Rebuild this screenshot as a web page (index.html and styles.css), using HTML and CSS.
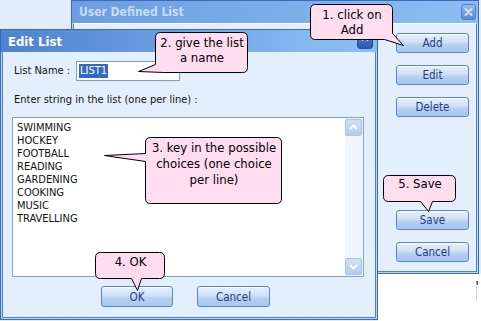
FILE: index.html
```html
<!DOCTYPE html>
<html>
<head>
<meta charset="utf-8">
<link rel="stylesheet" href="styles.css">
</head>
<body>
<div class="desk">
  <div class="desk-white"><span class="edge-tick"></span></div>

  <div class="win win-back">
    <div class="titlebar inactive">
      <span class="title">User Defined List</span>
      <span class="close"><svg width="15" height="16" viewBox="0 0 15 16"><path d="M4.5 5 L10.5 11 M10.5 5 L4.5 11" stroke="#d3e2f7" stroke-width="2.2" stroke-linecap="round"/></svg></span>
    </div>
    <div class="frame">
      <div class="win-body back-body">
        <div class="back-left"></div>
        <div class="back-col">
          <div class="grp">
            <button class="btn">Add</button>
            <button class="btn">Edit</button>
            <button class="btn">Delete</button>
          </div>
          <div class="grp">
            <button class="btn">Save</button>
            <button class="btn">Cancel</button>
          </div>
        </div>
      </div>
    </div>
  </div>

  <div class="win win-edit">
    <div class="titlebar">
      <span class="title title-edit">Edit List</span>
      <span class="roll"><svg width="16" height="16" viewBox="0 0 16 16"><path d="M5 7.5 L8 4.5 L11 7.5" fill="none" stroke="#fff" stroke-width="1.6"/></svg></span>
    </div>
    <div class="frame">
      <div class="win-body edit-body">
        <div class="name-row">
          <span class="lbl">List Name :</span>
          <div class="input"><span class="sel">LIST1</span></div>
        </div>
        <div class="lbl lbl-enter">Enter string in the list (one per line) :</div>
        <div class="memo">
          <div class="lines">
            <div>SWIMMING</div>
            <div>HOCKEY</div>
            <div>FOOTBALL</div>
            <div>READING</div>
            <div>GARDENING</div>
            <div>COOKING</div>
            <div>MUSIC</div>
            <div>TRAVELLING</div>
          </div>
          <div class="vscroll">
            <span class="sbtn"><svg width="17" height="17" viewBox="0 0 17 17"><path d="M5 10 L8.5 6.5 L12 10" fill="none" stroke="#fff" stroke-width="1.8"/></svg></span>
            <span class="track"></span>
            <span class="sbtn"><svg width="17" height="17" viewBox="0 0 17 17"><path d="M5 7 L8.5 10.5 L12 7" fill="none" stroke="#fff" stroke-width="1.8"/></svg></span>
          </div>
        </div>
        <div class="btn-row">
          <button class="btn">OK</button>
          <button class="btn">Cancel</button>
        </div>
      </div>
    </div>
  </div>

  <svg class="callouts" width="481" height="321" viewBox="0 0 481 321">
    <path d="M315.5,4.5 H387.5 Q392.5,4.5 392.5,9.5 V33.5 L403.5,45.5 L384.5,39.5 H315.5 Q310.5,39.5 310.5,34.5 V9.5 Q310.5,4.5 315.5,4.5 Z"/>
    <path d="M160.5,32.5 H242.5 Q247.5,32.5 247.5,37.5 V67.5 Q247.5,72.5 242.5,72.5 H163.5 L138.5,71.5 L155.5,64.5 V37.5 Q155.5,32.5 160.5,32.5 Z"/>
    <path d="M150.5,137.5 H276.5 Q281.5,137.5 281.5,142.5 V198.5 Q281.5,203.5 276.5,203.5 H150.5 Q145.5,203.5 145.5,198.5 V161.5 L104.5,155.5 L145.5,153.5 V142.5 Q145.5,137.5 150.5,137.5 Z"/>
    <path d="M100.5,252.5 H159.5 Q164.5,252.5 164.5,257.5 V273.5 Q164.5,278.5 159.5,278.5 H141.5 L137.5,290.5 L131.5,278.5 H100.5 Q95.5,278.5 95.5,273.5 V257.5 Q95.5,252.5 100.5,252.5 Z"/>
    <path d="M388.5,175.5 H450.5 Q455.5,175.5 455.5,180.5 V196.5 Q455.5,201.5 450.5,201.5 H432.5 L428.5,211.5 L420.5,201.5 H388.5 Q383.5,201.5 383.5,196.5 V180.5 Q383.5,175.5 388.5,175.5 Z"/>
  </svg>
  <div class="ctext c1">1. click on<br>Add</div>
  <div class="ctext c2">2. give the list<br>a name</div>
  <div class="ctext c3">3. key in the possible<br>choices (one choice<br>per line)</div>
  <div class="ctext c4">4. OK</div>
  <div class="ctext c5">5. Save</div>
</div>
</body>
</html>
```

FILE: styles.css
```css
* { box-sizing: border-box; }
html, body { margin: 0; padding: 0; }
body {
  width: 481px;
  height: 321px;
  overflow: hidden;
  font-family: "DejaVu Sans Condensed", "DejaVu Sans", sans-serif;
  font-stretch: condensed;
  font-size: 11px;
  color: #000;
}
.desk {
  position: relative;
  width: 481px;
  height: 321px;
  background: #e0ecf9;
}
.desk-white {
  position: absolute;
  left: 378px;
  top: 274px;
  width: 103px;
  height: 47px;
  background: #fff;
}
.edge-tick {
  position: absolute;
  left: 98px;
  top: 7px;
  width: 2px;
  height: 20px;
  border-left: 1px solid #c9d3de;
  border-top: 4px solid #6c58a8;
}

/* windows */
.win {
  position: absolute;
  display: flex;
  flex-direction: column;
  border: 1px solid #3a6bbd;
  background: #e3effc;
}
.win-back { left: 71px; top: 0; width: 408px; height: 274px; }
.win-edit { left: 0; top: 29px; width: 378px; height: 291px; }

.titlebar {
  height: 22px;
  flex: none;
  display: flex;
  align-items: center;
  padding-left: 7px;
  background: linear-gradient(90deg, #4d83cf 0%, #6a9fe2 45%, #84b8f0 80%, #8cbdf2 100%);
}
.titlebar.inactive {
  background: linear-gradient(90deg, #6b9de0 0%, #7aaeea 50%, #8dbdf2 100%);
}
.title {
  flex: 1;
  font-weight: bold;
  font-size: 12px;
  color: #fff;
}
.title-edit { font-size: 13px; }
.inactive .title { color: #cadcf5; }

.close {
  width: 15px;
  height: 16px;
  margin-right: 2px;
  border-radius: 3px;
  border: 1px solid #4d7fcb;
  background: linear-gradient(#9cc0ee, #6f9de0 55%, #5a8bd7);
  display: flex;
}
.close svg { margin: -1px; }
.roll {
  width: 16px;
  height: 16px;
  margin-right: 4px;
  border-radius: 3px;
  background: linear-gradient(#4e7fcf, #2a5bb0);
  border: 1px solid #24509e;
  display: flex;
}
.roll svg { margin: -1px; }

.frame {
  flex: 1;
  display: flex;
  padding: 0 1px 1px;
  background: #bcd3f1;
}
.win-body {
  flex: 1;
  border: 1px solid #4f80cb;
  border-top: none;
  background: #e3effc;
}

/* back window */
.back-body {
  display: flex;
  border-top: 1px solid #fff;
}
.back-left { flex: 1; }
.back-col {
  width: 73px;
  margin-right: 7px;
  padding: 9px 0 9px;
  display: flex;
  flex-direction: column;
  justify-content: space-between;
}
.grp {
  display: flex;
  flex-direction: column;
  gap: 12px;
}

.btn {
  width: 73px;
  height: 20px;
  padding: 0;
  border: 1px solid #5f86c6;
  border-radius: 3px;
  background: linear-gradient(#e8f1fc 0%, #cfe0f6 45%, #b5cff1 60%, #a9c6ee 100%);
  box-shadow: inset 0 1px 0 #f6faff;
  font-family: inherit;
  font-stretch: condensed;
  font-size: 11.5px;
  color: #1f3c8c;
  line-height: 18px;
}

/* edit list */
.edit-body {
  display: flex;
  flex-direction: column;
  padding-left: 9px;
}
.name-row {
  display: flex;
  align-items: center;
  margin-top: 9px;
  height: 20px;
}
.lbl { padding-left: 2px; line-height: 14px; color: #111; }
.name-row .lbl { width: 64px; }
.input {
  width: 104px;
  height: 20px;
  border: 1px solid #7b9dd3;
  background: #fff;
  padding: 2px 0 0 2px;
}
.sel {
  display: inline-block;
  background: #316ac5;
  color: #fff;
  height: 14px;
  line-height: 14px;
  padding: 0 1px;
}
.lbl-enter { margin-top: 12px; }

.memo {
  margin-top: 10px;
  width: 352px;
  height: 160px;
  border: 1px solid #7fa3d6;
  background: #fff;
  display: flex;
}
.lines {
  flex: 1;
  padding: 3px 0 0 4px;
  line-height: 13px;
  color: #111;
}
.vscroll {
  width: 18px;
  display: flex;
  flex-direction: column;
  padding: 1px 1px 1px 0;
  background: #f1f6fd;
}
.sbtn {
  width: 17px;
  height: 17px;
  border-radius: 2px;
  background: linear-gradient(#cfe1f7, #b3cdf0);
  border: 1px solid #a8c4ea;
  display: flex;
}
.sbtn svg { margin: -1px; }
.track { flex: 1; }

.btn-row {
  display: flex;
  gap: 24px;
  margin-top: 9px;
  padding-left: 89px;
}
.btn-row .btn { width: 72px; height: 21px; }
.btn-row .btn + .btn { width: 73px; }

/* callouts */
.callouts {
  position: absolute;
  left: 0;
  top: 0;
  pointer-events: none;
}
.callouts path {
  fill: #ffdcee;
  stroke: #000;
  stroke-width: 1;
}
.ctext {
  position: absolute;
  text-align: center;
  font-size: 13px;
  line-height: 15px;
  color: #000;
  white-space: nowrap;
}
.c1 { left: 311px; width: 82px; top: 7px; }
.c2 { left: 156px; width: 92px; top: 35px; }
.c3 { left: 146px; width: 136px; top: 140px; line-height: 16px; }
.c4 { left: 96px; width: 69px; top: 254px; }
.c5 { left: 384px; width: 72px; top: 176px; }
```
